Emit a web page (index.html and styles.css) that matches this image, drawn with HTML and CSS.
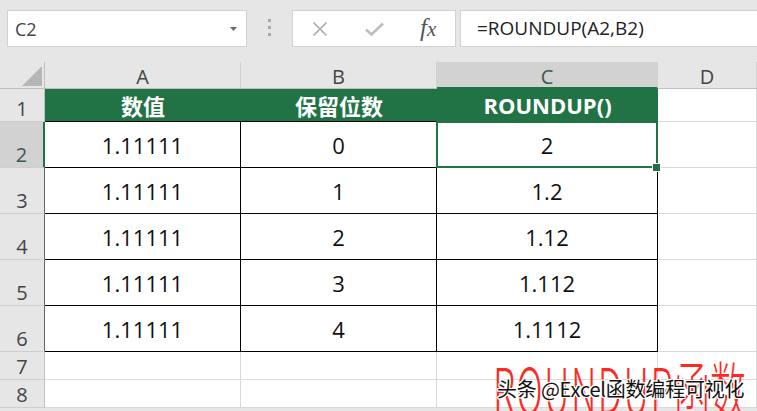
FILE: index.html
```html
<!DOCTYPE html>
<html>
<head>
<meta charset="utf-8">
<link rel="stylesheet" href="styles.css">
</head>
<body>
<div class="toolbar">
  <div class="namebox">
    <span class="ref">C2</span>
    <svg class="dd" width="7" height="4" viewBox="0 0 7 4"><path d="M0 0H7L3.5 4Z" fill="#6a6a6a"/></svg>
  </div>
  <div class="dots"><i></i><i></i><i></i></div>
  <div class="iconbox">
    <svg class="ic-x" width="16" height="16" viewBox="0 0 16 16"><path d="M1.5 1.5L14.5 14.5M14.5 1.5L1.5 14.5" stroke="#ababab" stroke-width="1.6" fill="none"/></svg>
    <svg class="ic-ok" width="19" height="14" viewBox="0 0 19 14"><path d="M1 7.5L6.5 12.5L18 1.5" stroke="#bdbdbd" stroke-width="2.6" fill="none"/></svg>
    <span class="fx">f<span class="fxx">x</span></span>
  </div>
  <div class="formula">=ROUNDUP(A2,B2)</div>
</div>
<div class="sheet">
  <div class="corner"><span class="tri"></span></div>
  <div class="colhead">A</div>
  <div class="colhead">B</div>
  <div class="colhead sel">C</div>
  <div class="colhead">D</div>

  <div class="rowhead">1</div>
  <div class="hdr">数值</div>
  <div class="hdr">保留位数</div>
  <div class="hdr">ROUNDUP()</div>
  <div class="cell"></div>

  <div class="rowhead sel tb">2</div>
  <div class="tcell">1.11111</div>
  <div class="tcell">0</div>
  <div class="tcell active">2<span class="handle"></span></div>
  <div class="cell"></div>

  <div class="rowhead tb">3</div>
  <div class="tcell">1.11111</div>
  <div class="tcell">1</div>
  <div class="tcell">1.2</div>
  <div class="cell"></div>

  <div class="rowhead tb">4</div>
  <div class="tcell">1.11111</div>
  <div class="tcell">2</div>
  <div class="tcell">1.12</div>
  <div class="cell"></div>

  <div class="rowhead tb">5</div>
  <div class="tcell">1.11111</div>
  <div class="tcell">3</div>
  <div class="tcell">1.112</div>
  <div class="cell"></div>

  <div class="rowhead tb">6</div>
  <div class="tcell">1.11111</div>
  <div class="tcell">4</div>
  <div class="tcell">1.1112</div>
  <div class="cell"></div>

  <div class="rowhead">7</div>
  <div class="cell"></div>
  <div class="cell"></div>
  <div class="cell"></div>
  <div class="cell"></div>

  <div class="rowhead">8</div>
  <div class="cell"></div>
  <div class="cell"></div>
  <div class="cell"></div>
  <div class="cell"></div>
</div>
<div class="wm">
  <div class="wm-title"><span class="wm-lat">ROUNDUP</span>函数</div>
  <div class="wm-credit">头条 @Excel函数编程可视化</div>
</div>
</body>
</html>
```
FILE: styles.css
```css
html, body {
  margin: 0;
  padding: 0;
}
html {
  width: 757px;
  height: 411px;
  overflow: hidden;
}
body {
  width: 757px;
  height: 411px;
  overflow: hidden;
  position: relative;
  background: #e6e6e6;
  font-family: "Open Sans", "Noto Sans CJK SC", sans-serif;
}

/* ---------- toolbar ---------- */
.toolbar {
  height: 62px;
  box-sizing: border-box;
  padding: 10px 0 0 7px;
  display: flex;
  align-items: flex-start;
}
.namebox {
  width: 240px;
  height: 37px;
  box-sizing: border-box;
  background: #fff;
  border: 1px solid #d2d2d2;
  display: flex;
  align-items: center;
  justify-content: space-between;
  padding: 0 9px 0 7px;
}
.ref {
  font-size: 18px;
  color: #444;
  line-height: 1;
}
.dots {
  width: 3px;
  height: 17px;
  margin: 9px 0 0 21px;
  display: flex;
  flex-direction: column;
  justify-content: space-between;
}
.dots i {
  display: block;
  width: 3px;
  height: 3px;
  background: #a9a9a9;
}
.iconbox {
  margin-left: 21px;
  width: 164px;
  height: 37px;
  box-sizing: border-box;
  background: #fff;
  border: 1px solid #d2d2d2;
  display: flex;
  align-items: center;
  padding-left: 19px;
}
.ic-ok {
  margin-left: 37px;
}
.fx {
  margin-left: 36px;
  font-family: "Liberation Serif", serif;
  font-style: italic;
  font-size: 25px;
  color: #555;
  line-height: 1;
  margin-top: -3px;
}
.fxx {
  font-size: 21px;
}
.formula {
  margin-left: 4px;
  flex: 1;
  height: 37px;
  box-sizing: border-box;
  background: #fff;
  border: 1px solid #d2d2d2;
  border-right: none;
  padding-left: 16px;
  font-size: 19px;
  color: #222;
  line-height: 35px;
}

/* ---------- sheet ---------- */
.sheet {
  display: grid;
  grid-template-columns: 45px 196px 196px 221px 1fr;
  grid-template-rows: 27px 33px repeat(5, 46px) 28px 28px;
  background: #fff;
}
.sheet > div {
  box-sizing: border-box;
  display: flex;
  align-items: center;
  justify-content: center;
}
.corner {
  background: #e6e6e6;
  border-right: 1px solid #bfbfbf;
  border-bottom: 1px solid #bfbfbf;
  align-items: flex-end !important;
  justify-content: flex-end !important;
  padding: 0 2px 2px 0;
}
.tri {
  display: block;
  width: 20px;
  height: 20px;
  background: #b6b6b6;
  clip-path: polygon(100% 0, 100% 100%, 0 100%);
}
.colhead {
  background: #e6e6e6;
  border-right: 1px solid #d0d0d0;
  border-bottom: 1px solid #bfbfbf;
  font-size: 20px;
  color: #444;
  padding-top: 3px;
}
.colhead.sel {
  background: #d2d2d2;
  color: #3d5a4a;
  border-bottom: 2px solid #217346;
}
.rowhead {
  background: #e6e6e6;
  border-right: 1px solid #bfbfbf;
  border-bottom: 1px solid #cfcfcf;
  font-size: 20px;
  color: #444;
  line-height: 20px;
  align-items: flex-end !important;
  padding-bottom: 2px;
}
.rowhead.tb {
  border-right-color: #666;
}
.rowhead.sel {
  background: #d2d2d2;
  color: #3d5a4a;
  border-right: 2px solid #217346;
}
.hdr {
  background: #217346;
  color: #fff;
  font-weight: 700;
  font-size: 22px;
  border-bottom: 1px solid #000;
}
.tcell {
  background: #fff;
  color: #111;
  font-size: 22px;
  border-right: 1px solid #000;
  border-bottom: 1px solid #000;
}
.cell {
  background: #fff;
  border-right: 1px solid #d9d9d9;
  border-bottom: 1px solid #d9d9d9;
}
.active {
  position: relative;
}
.active::after {
  content: "";
  position: absolute;
  left: -1px;
  top: -1px;
  right: -1px;
  bottom: -1px;
  border: 2px solid #217346;
  pointer-events: none;
}
.handle {
  position: absolute;
  right: -3px;
  bottom: -4px;
  width: 7px;
  height: 7px;
  background: #217346;
  box-shadow: 0 0 0 1px #fff;
  z-index: 2;
}

/* ---------- watermark overlay ---------- */
.wm {
  position: absolute;
  left: 480px;
  top: 352px;
  width: 277px;
  height: 59px;
  overflow: hidden;
}
.wm-title {
  position: absolute;
  left: 13px;
  top: 2px;
  font-family: "Noto Sans CJK SC", sans-serif;
  font-weight: 300;
  font-size: 36px;
  line-height: 36px;
  height: 36px;
  color: #ff2a1f;
  white-space: nowrap;
  transform: scaleY(1.75);
  transform-origin: 0 0;
}
.wm-lat {
  letter-spacing: 1.5px;
}
.wm-credit {
  position: absolute;
  left: 17px;
  top: 27px;
  font-family: "Noto Sans CJK SC", sans-serif;
  font-size: 20px;
  line-height: 20px;
  color: #111;
  white-space: nowrap;
  letter-spacing: -0.2px;
  text-shadow: 1px 0 #fff, -1px 0 #fff, 0 1px #fff, 0 -1px #fff,
    1px 1px #fff, -1px -1px #fff, 1px -1px #fff, -1px 1px #fff;
}
```
